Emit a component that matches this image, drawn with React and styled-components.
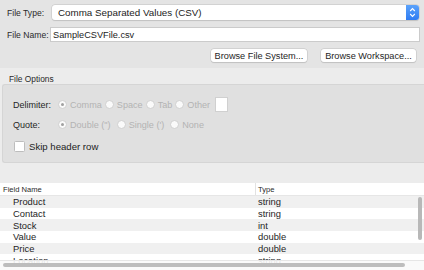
import styled, { createGlobalStyle } from 'styled-components';

const GlobalStyle = createGlobalStyle`
  html, body {
    margin: 0;
    padding: 0;
    background: #ececec;
  }
  body {
    font-family: "Liberation Sans", Arial, sans-serif;
    color: #222;
  }
`;

const Page = styled.div`
  width: 424px;
  height: 270px;
  overflow: hidden;
  display: flex;
  flex-direction: column;
  background: #ececec;
`;

const TopPanel = styled.div`
  height: 68px;
  box-sizing: border-box;
  background: #e4e4e4;
  padding: 5px 4px 0 7px;
  display: flex;
  flex-direction: column;
`;

const FieldRow = styled.div`
  display: flex;
  align-items: center;
  height: ${(p) => p.$h || 15}px;
  margin-bottom: ${(p) => p.$mb || 0}px;
`;

const Label = styled.span`
  font-size: 8.6px;
  color: #2a2a2a;
  width: ${(p) => p.$w}px;
  flex-shrink: 0;
  white-space: nowrap;
`;

const Select = styled.div`
  flex: 1;
  height: 15px;
  margin-right: 1px;
  background: #fff;
  border-radius: 3px;
  box-shadow: 0 0 0 0.5px #c4c4c4, 0 0.5px 1px rgba(0, 0, 0, 0.15);
  display: flex;
  align-items: center;
  justify-content: space-between;
  padding-left: 6px;
  font-size: 9.8px;
  color: #1c1c1c;
`;

const Stepper = styled.div`
  width: 13px;
  height: 15px;
  border-radius: 0 3px 3px 0;
  background: linear-gradient(#5aa2fb, #2f7cf2);
  display: flex;
  align-items: center;
  justify-content: center;
`;

const TextInput = styled.div`
  flex: 1;
  height: 13px;
  background: #fff;
  border: 1px solid #cbcbcb;
  display: flex;
  align-items: center;
  padding-left: 2px;
  font-size: 9.2px;
  color: #1c1c1c;
`;

const ButtonRow = styled.div`
  display: flex;
  justify-content: flex-end;
  gap: 14px;
  padding-right: 4px;
`;

const Button = styled.div`
  width: ${(p) => p.$w}px;
  height: 13px;
  background: #fff;
  border-radius: 3px;
  box-shadow: 0 0 0 0.5px #c2c2c2, 0 0.5px 1px rgba(0, 0, 0, 0.15);
  display: flex;
  align-items: center;
  justify-content: center;
  font-size: 9.2px;
  color: #262626;
  white-space: nowrap;
`;

const OptionsSection = styled.div`
  padding: 6px 0 0 2px;
  height: 115px;
  box-sizing: border-box;
`;

const SectionTitle = styled.div`
  font-size: 8.4px;
  color: #2a2a2a;
  padding-left: 7px;
  height: 10px;
  line-height: 10px;
`;

const GroupBox = styled.div`
  height: 79px;
  box-sizing: border-box;
  background: #e0e0e0;
  border: 1px solid #d5d5d5;
  border-right: none;
  border-radius: 3px 0 0 3px;
  padding: 13px 0 0 10px;
`;

const OptionRow = styled.div`
  display: flex;
  align-items: center;
  height: 13px;
  margin-bottom: ${(p) => p.$mb || 0}px;
`;

const OptLabel = styled.span`
  width: 45px;
  font-size: 9px;
  color: #262626;
`;

const Radio = styled.span`
  display: inline-flex;
  align-items: center;
  gap: 3px;
  margin-right: ${(p) => p.$mr || 3}px;
  font-size: 9.1px;
  color: #b3b3b3;
  white-space: nowrap;
`;

const Dot = styled.span`
  width: 9px;
  height: 9px;
  box-sizing: border-box;
  border-radius: 50%;
  background: #fafafa;
  border: 0.5px solid #d0d0d0;
  display: inline-flex;
  align-items: center;
  justify-content: center;

  &::after {
    content: '';
    width: 3px;
    height: 3px;
    border-radius: 50%;
    background: ${(p) => (p.$on ? '#a0a0a0' : 'transparent')};
  }
`;

const SmallBox = styled.span`
  width: 11px;
  height: 13px;
  background: #fff;
  border: 0.5px solid #d0d0d0;
  margin-left: 2px;
`;

const CheckRow = styled.div`
  display: flex;
  align-items: center;
  gap: 4px;
  margin-top: 10px;
  padding-left: 1px;
  font-size: 9.6px;
  color: #222;
`;

const CheckBox = styled.span`
  width: 9px;
  height: 9px;
  background: #fff;
  border: 0.5px solid #bdbdbd;
  border-radius: 1.5px;
`;

const TableWrap = styled.div`
  position: relative;
  flex: 1;
  background: #fff;
  overflow: hidden;
`;

const HeaderRow = styled.div`
  display: grid;
  grid-template-columns: 255px 1fr;
  height: 12px;
  align-items: center;
  background: #fff;
  border-bottom: 0.5px solid #e6e6e6;
  font-size: 7.6px;
  color: #2a2a2a;
`;

const HeaderCell = styled.div`
  padding-left: ${(p) => p.$pl}px;
  height: 100%;
  display: flex;
  align-items: center;
  border-left: ${(p) => (p.$divider ? '1px solid #e2e2e2' : 'none')};
`;

const DataRow = styled.div`
  display: grid;
  grid-template-columns: 256px 1fr;
  height: 11.7px;
  align-items: center;
  background: ${(p) => (p.$alt ? '#f0f0f0' : '#fff')};
  font-size: 9.4px;
  color: #1e1e1e;
`;

const Cell = styled.div`
  padding-left: ${(p) => p.$pl}px;
`;

const VScroll = styled.div`
  position: absolute;
  right: 2px;
  top: 14px;
  width: 4px;
  height: 43px;
  border-radius: 2px;
  background: #b8b8b8;
`;

const HTrack = styled.div`
  position: absolute;
  left: 0;
  right: 0;
  bottom: 0;
  height: 9px;
  background: rgba(250, 250, 250, 0.9);
  border-top: 0.5px solid #e6e6e6;
`;

const HScroll = styled.div`
  position: absolute;
  left: 3px;
  bottom: 3px;
  width: 402px;
  height: 4px;
  border-radius: 2px;
  background: #bdbdbd;
`;

const fields = [
  ['Product', 'string'],
  ['Contact', 'string'],
  ['Stock', 'int'],
  ['Value', 'double'],
  ['Price', 'double'],
  ['Location', 'string'],
];

export default function App() {
  return (
    <>
      <GlobalStyle />
      <Page>
        <TopPanel>
          <FieldRow $mb={7}>
            <Label $w={45}>File Type:</Label>
            <Select>
              Comma Separated Values (CSV)
              <Stepper>
                <svg width="7" height="11" viewBox="0 0 7 11">
                  <path d="M1.2 4 L3.5 1.6 L5.8 4" fill="none" stroke="#fff" strokeWidth="1.1" />
                  <path d="M1.2 7 L3.5 9.4 L5.8 7" fill="none" stroke="#fff" strokeWidth="1.1" />
                </svg>
              </Stepper>
            </Select>
          </FieldRow>
          <FieldRow $mb={7}>
            <Label $w={43}>File Name:</Label>
            <TextInput>SampleCSVFile.csv</TextInput>
          </FieldRow>
          <ButtonRow>
            <Button $w={96}>Browse File System...</Button>
            <Button $w={95}>Browse Workspace...</Button>
          </ButtonRow>
        </TopPanel>

        <OptionsSection>
          <SectionTitle>File Options</SectionTitle>
          <GroupBox>
            <OptionRow $mb={7}>
              <OptLabel>Delimiter:</OptLabel>
              <Radio $mr={3}><Dot $on />Comma</Radio>
              <Radio $mr={3}><Dot />Space</Radio>
              <Radio $mr={3}><Dot />Tab</Radio>
              <Radio $mr={3}><Dot />Other</Radio>
              <SmallBox />
            </OptionRow>
            <OptionRow>
              <OptLabel>Quote:</OptLabel>
              <Radio $mr={6}><Dot $on />Double (")</Radio>
              <Radio $mr={6}><Dot />Single (')</Radio>
              <Radio><Dot />None</Radio>
            </OptionRow>
            <CheckRow>
              <CheckBox />
              Skip header row
            </CheckRow>
          </GroupBox>
        </OptionsSection>

        <TableWrap>
          <HeaderRow>
            <HeaderCell $pl={3}>Field Name</HeaderCell>
            <HeaderCell $pl={2} $divider>Type</HeaderCell>
          </HeaderRow>
          {fields.map(([name, type], i) => (
            <DataRow key={name} $alt={i % 2 === 0}>
              <Cell $pl={13}>{name}</Cell>
              <Cell $pl={2}>{type}</Cell>
            </DataRow>
          ))}
          <VScroll />
          <HTrack />
          <HScroll />
        </TableWrap>
      </Page>
    </>
  );
}
